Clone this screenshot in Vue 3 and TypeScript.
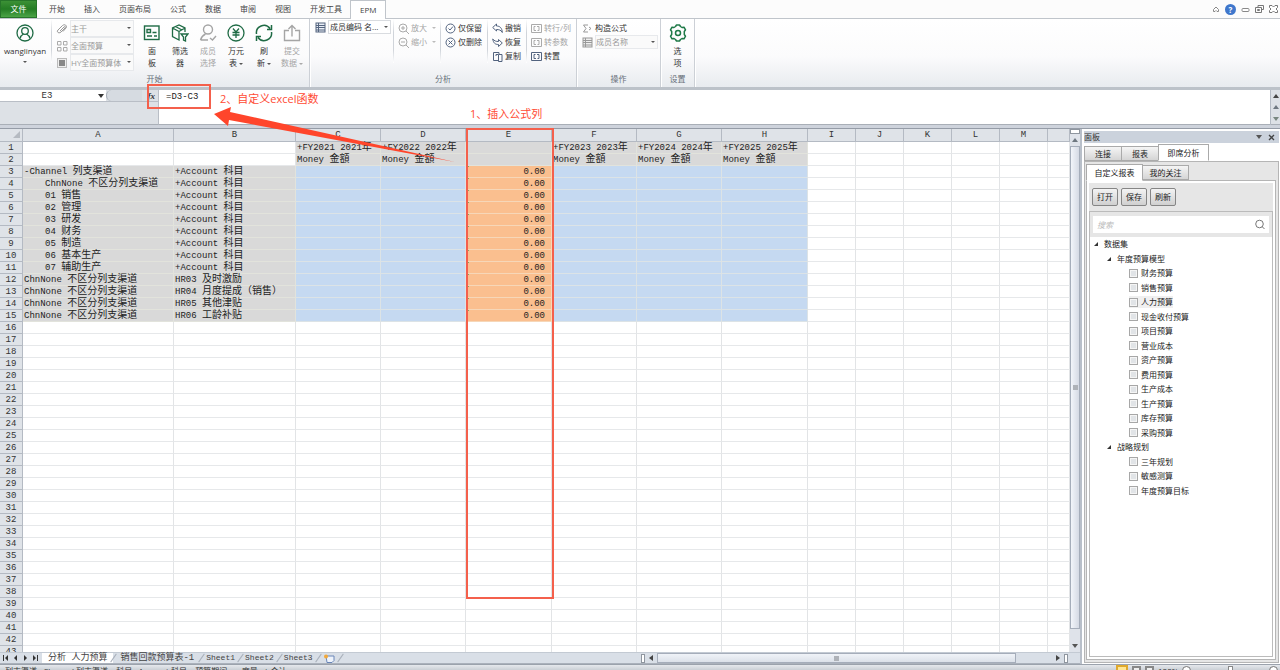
<script setup lang="ts">
import { ref } from 'vue'

interface Run { text: string; cjk: boolean }
interface Node { label: string; level: number; hover?: boolean }

const split = (s: string): Run[] =>
  s.split(/([\u2e80-\uffff]+)/).filter(Boolean).map(text => ({ text, cjk: /[\u2e80-\uffff]/.test(text) }))

const menu = ['开始', '插入', '页面布局', '公式', '数据', '审阅', '视图', '开发工具']
const columns = 'ABCDEFGHIJKLM'.split('')
const rowCount = 43

const chn = 'ChnNone 不区分列支渠道'
const acc = '+Account 科目'
const members: [string, string, number][] = [
  ['-Channel 列支渠道', acc, 0],
  [chn, acc, 1],
  ['01 销售', acc, 1],
  ['02 管理', acc, 1],
  ['03 研发', acc, 1],
  ['04 财务', acc, 1],
  ['05 制造', acc, 1],
  ['06 基本生产', acc, 1],
  ['07 辅助生产', acc, 1],
  [chn, 'HR03 及时激励', 0],
  [chn, 'HR04 月度提成（销售）', 0],
  [chn, 'HR05 其他津贴', 0],
  [chn, 'HR06 工龄补贴', 0],
]
const years: Record<string, string> = { C: '2021', D: '2022', F: '2023', G: '2024', H: '2025' }

function cellText(row: number, col: string): string {
  if (row <= 2 && years[col]) return row === 1 ? `+FY${years[col]} ${years[col]}年` : 'Money 金額'
  const m = members[row - 3]
  if (!m) return ''
  if (col === 'A') return m[0]
  if (col === 'B') return m[1]
  return col === 'E' ? '0.00' : ''
}
function cellClass(row: number, col: string): string[] {
  const out: string[] = []
  if (row <= 2) {
    if ('CDEFGH'.includes(col)) out.push('dim')
  } else if (row <= 15) {
    if ('AB'.includes(col)) out.push('dim')
    else if (col === 'E') out.push('calc')
    else if ('CDFGH'.includes(col)) out.push('data')
    if (col === 'A' && members[row - 3][2]) out.push('indent')
  }
  return out
}

const tree: Node[] = [
  { label: '数据集', level: 0 },
  { label: '年度预算模型', level: 1 },
  ...['财务预算', '销售预算', '人力预算', '现金收付预算', '项目预算', '营业成本', '资产预算', '费用预算', '生产成本', '生产预算', '库存预算', '采购预算']
    .map(label => ({ label, level: 2, hover: label === '人力预算' })),
  { label: '战略规划', level: 1 },
  ...['三年规划', '敏感测算', '年度预算目标'].map(label => ({ label, level: 2 })),
]

const cellName = ref('E3')
const formula = ref('=D3-C3')
const query = ref('')
</script>

<template>
  <div class="app">
    <nav class="menu">
      <button class="file">文件</button>
      <button v-for="m in menu" :key="m" class="tab">{{ m }}</button>
      <button class="tab current">EPM</button>
      <div class="window">
        <button aria-label="折叠功能区"><svg width="8" height="8" viewBox="0 0 8 8"><path d="M1.500 4.500L4 2l2.500 2.500v2H5L4 5.500l-1 1H1.500z" fill="#fff" stroke="#888" /></svg></button>
        <button aria-label="帮助" class="help">?</button>
        <button aria-label="最小化"><svg width="9" height="8" viewBox="0 0 9 8"><rect x="1" y="3.500" width="7" height="3" rx="1" fill="#fff" stroke="#888" /></svg></button>
        <button aria-label="还原"><svg width="9" height="8" viewBox="0 0 9 8"><path d="M3 2.500v-2h5.500v4h-2M.5 2.500h6v5h-6zM2.500 4.500h2v1h-2z" fill="none" stroke="#777" /></svg></button>
        <button aria-label="关闭"><svg width="9" height="8" viewBox="0 0 9 8"><path d="M.5.5h2.500l1.500 1.500L6 .5h2.500v2L7 4l1.500 1.500v2H6L4.500 6 3 7.500H.5v-2L2 4 .5 2.500z" fill="#fff" stroke="#777" /></svg></button>
      </div>
    </nav>

    <header class="ribbon">
      <section class="group start">
        <div class="tools">
          <button class="big user">
            <svg width="18" height="18" viewBox="0 0 18 18" fill="none" stroke="#1f6b45" stroke-width="1.300"><circle cx="9" cy="9" r="8" /><circle cx="9" cy="7" r="3.300" /><path d="M4 14.500c.6-3 2.500-4 3.500-4.500M14 14.500c-.6-3-2.500-4-3.500-4.500" /></svg>
            <span>wanglinyan</span><i class="caret"></i>
          </button>
          <span class="rule"></span>
          <div class="combos">
            <label class="combo">
              <svg width="12" height="12" viewBox="0 0 12 12" fill="none" stroke="#999"><path d="M4 8l4-4c1-1 2 0 1 1L5 9C3 11 0 9 2 7l4.500-4.500c2.500-2 5 .5 3.500 2.500L7 8.500" /></svg>
              <span class="pick"><select disabled aria-label="版本"><option>主干</option></select><i class="caret"></i></span>
            </label>
            <label class="combo">
              <svg width="12" height="12" viewBox="0 0 12 12" fill="none" stroke="#aaa"><path d="M1.500 1.500h3.500v3.500H1.500zM7.500 1.500H11v3.500H7.500zM1.500 7.500h3.500V11H1.500zM7.500 7.500H11V11H7.500z" /></svg>
              <span class="pick"><select disabled aria-label="模型"><option>全面预算</option></select><i class="caret"></i></span>
            </label>
            <label class="combo">
              <svg width="12" height="12" viewBox="0 0 12 12"><rect x="1.500" y="1.500" width="9" height="9" fill="#eee" stroke="#bbb" /><rect x="3" y="3" width="6" height="6" fill="#888" /></svg>
              <span class="pick"><select disabled aria-label="体系"><option>HY全面预算体</option></select><i class="caret"></i></span>
            </label>
          </div>
          <div class="bigs">
            <button class="big">
              <svg width="18" height="18" viewBox="0 0 18 18" fill="none" stroke="#1f6b45" stroke-width="1.400"><rect x="1.500" y="2" width="14.500" height="13.500" /><path d="M4 5.500h3.500v3H4zM9.500 8.500h4M4 12h5M11 12h3" /></svg>
              <span>面<br />板</span>
            </button>
            <button class="big">
              <svg width="18" height="18" viewBox="0 0 18 18" fill="none" stroke="#1f6b45" stroke-width="1.300"><path d="M14 8V4L8 1 1.500 4v8.500L8 16V7.500L14 4M8 7.500L1.500 4M4.500 2.500L11 6" /><path d="M10 10h7l-2.500 3v4L12.500 16v-3z" /></svg>
              <span>筛选<br />器</span>
            </button>
            <button class="big off" disabled>
              <svg width="18" height="18" viewBox="0 0 18 18" fill="none" stroke="#a5a5a5" stroke-width="1.400"><circle cx="9" cy="5.500" r="4.500" /><path d="M1.500 16c1-4 3-5 5-6M1.500 16H9M11 14l2.500 2L17 12" /></svg>
              <span>成员<br />选择</span>
            </button>
            <button class="big">
              <svg width="18" height="18" viewBox="0 0 18 18" fill="none" stroke="#1f6b45" stroke-width="1.300"><circle cx="9" cy="9" r="8" /><path d="M6 4.500L9 8l3-3.500M9 8v6M5.500 8.500h7M5.500 11h7" /></svg>
              <span>万元<br />表 <i class="caret"></i></span>
            </button>
            <button class="big">
              <svg width="18" height="18" viewBox="0 0 18 18" fill="none" stroke="#1f6b45" stroke-width="1.500"><path d="M1.500 10A7.500 7.500 0 0 1 15 4.500M16.500 1v4.500H12M16.500 8A7.500 7.500 0 0 1 3 13.500M1.500 17v-4.500H6" /></svg>
              <span>刷<br />新 <i class="caret"></i></span>
            </button>
            <button class="big off" disabled>
              <svg width="18" height="18" viewBox="0 0 18 18" fill="none" stroke="#a5a5a5" stroke-width="1.400"><path d="M6 6.500H1.500v10h15v-10H12M9 12.500V2M5.500 5L9 1.500 12.500 5" /></svg>
              <span>提交<br />数据 <i class="caret"></i></span>
            </button>
          </div>
        </div>
        <h2>开始</h2>
      </section>

      <section class="group analysis">
        <div class="tools">
          <label class="combo names">
            <svg width="11" height="11" viewBox="0 0 11 11"><rect x="1" y="1" width="9" height="9" fill="#e9eef6" stroke="#55657f" /><path d="M1 3.500h9M1 5.500h9M1 8h9M3.500 1v9" stroke="#55657f" /></svg>
            <span class="pick lit"><select aria-label="成员显示"><option>成员编码 名...</option></select><i class="caret"></i></span>
          </label>
          <span class="rule"></span>
          <div class="smalls zoomers">
            <button disabled><svg width="11" height="11" viewBox="0 0 11 11" fill="none" stroke="#aaa"><circle cx="5" cy="5" r="4" /><path d="M8 8l3 3M3 5h4M5 3v4" /></svg>放大<i class="caret"></i></button>
            <button disabled><svg width="11" height="11" viewBox="0 0 11 11" fill="none" stroke="#aaa"><circle cx="5" cy="5" r="4" /><path d="M8 8l3 3M3 5h4" /></svg>缩小<i class="caret"></i></button>
          </div>
          <span class="rule"></span>
          <div class="smalls keepers">
            <button><svg width="11" height="11" viewBox="0 0 11 11" fill="none" stroke="#52637f"><circle cx="5.500" cy="5.500" r="4.500" /><path d="M3.500 5.500L5 7l3-3.500" /></svg>仅保留</button>
            <button><svg width="11" height="11" viewBox="0 0 11 11" fill="none" stroke="#52637f"><circle cx="5.500" cy="5.500" r="4.500" /><path d="M3.500 3.500l4 4M7.500 3.500l-4 4" /></svg>仅删除</button>
          </div>
          <span class="rule"></span>
          <div class="smalls history">
            <button><svg width="11" height="11" viewBox="0 0 11 11" fill="none" stroke="#52637f"><path d="M.7 4.500L4.500 1v2C8 3 10 5 10.300 9.500 9 7 7 6.500 4.500 6.500V8z" /></svg>撤销</button>
            <button><svg width="11" height="11" viewBox="0 0 11 11" fill="none" stroke="#52637f"><path d="M10.300 6L6.500 9.500v-2C3 7.500 1.500 6 .7 2 2.500 4 4 4.500 6.500 4.500v-2z" /></svg>恢复</button>
            <button><svg width="11" height="11" viewBox="0 0 11 11" fill="none" stroke="#52637f"><path d="M6.500 9.500h-5v-8H7v2M4 5V3.500h2M6.500 3.500h3.500v7H6.500z" /></svg>复制</button>
          </div>
          <span class="rule"></span>
          <div class="smalls swap">
            <button disabled><svg width="11" height="11" viewBox="0 0 11 11" fill="none" stroke="#aaa"><path d="M.5 1.500h10v8H.5zM4.500 3.500H3v4h2M6 3.500h2v4H6.500" /></svg>转行/列</button>
            <button disabled><svg width="11" height="11" viewBox="0 0 11 11" fill="none" stroke="#aaa"><path d="M.5 1.500h10v8H.5zM4.500 3.500H3v4h2M6 3.500h2v4H6.500" /></svg>转参数</button>
            <button><svg width="11" height="11" viewBox="0 0 11 11" fill="none" stroke="#52637f"><path d="M.5 1.500h10v8H.5zM4.500 3.500H3v4h2M6 3.500h2v4H6.500" /></svg>转置</button>
          </div>
        </div>
        <h2>分析</h2>
      </section>

      <section class="group ops">
        <div class="tools smalls">
          <button><svg width="11" height="11" viewBox="0 0 11 11" fill="none" stroke="#999"><path d="M6 2H1.500L4 5.500 1.500 9H6M7 4l2 1.500L7 7" /></svg>构造公式</button>
          <label class="combo">
            <svg width="11" height="11" viewBox="0 0 11 11"><rect x="1" y="1" width="9" height="9" fill="#eee" stroke="#999" /><path d="M1 3.500h9M1 5.500h9M1 8h9M3.500 1v9" stroke="#999" /></svg>
            <span class="pick"><select disabled aria-label="成员"><option>成员名称</option></select><i class="caret"></i></span>
          </label>
        </div>
        <h2>操作</h2>
      </section>

      <section class="group settings">
        <div class="tools">
          <button class="big">
            <svg width="18" height="18" viewBox="0 0 18 18" fill="none" stroke="#1f7a48" stroke-width="1.500"><path d="M6.500 2.500L7.500 1h3l1 1.500 1.500 1 2-.3 1.500 2.600L15.300 7.500v3l1.200 1.700-1.500 2.600-2-.3-1.500 1-1 1.500h-3l-1-1.500-1.500-1-2 .3-1.500-2.600L2.700 10.500v-3L1.500 5.800 3 3.200l2 .3z" stroke-linejoin="round" /><circle cx="9" cy="9" r="2.500" /></svg>
            <span>选<br />项</span>
          </button>
        </div>
        <h2>设置</h2>
      </section>
    </header>

    <div class="formulabar">
      <div class="namebox"><input v-model="cellName" aria-label="名称框" /><i class="caret"></i></div>
      <div class="fx"><span class="knob"></span><button aria-label="插入函数">fx</button></div>
      <textarea v-model="formula" aria-label="编辑栏" spellcheck="false"></textarea>
      <div class="fscroll"><i class="up dark"></i><i class="up"></i><i class="down"></i></div>
    </div>

    <main class="work">
      <div class="book">
        <div class="view">
          <div class="cells">
            <table>
              <colgroup>
                <col class="c-head" /><col class="c-a" /><col class="c-b" />
                <col class="c-m" /><col class="c-m" /><col class="c-w" /><col class="c-m" /><col class="c-m" /><col class="c-w" />
                <col v-for="n in 5" :key="n" class="c-s" /><col />
              </colgroup>
              <thead>
                <tr><th class="corner"><i></i></th><th v-for="c in columns" :key="c" scope="col">{{ c }}</th><th></th></tr>
              </thead>
              <tbody>
                <tr v-for="r in rowCount" :key="r">
                  <th scope="row">{{ r }}</th>
                  <td v-for="c in columns" :key="c" :class="cellClass(r, c)"><span v-for="(run, i) in split(cellText(r, c))" :key="i" :class="{ cjk: run.cjk }">{{ run.text }}</span></td>
                  <td></td>
                </tr>
              </tbody>
            </table>
          </div>
          <div class="vscroll"><span class="splitter"></span><i class="up"></i><div class="thumb"><b></b></div><i class="down"></i></div>
        </div>
        <div class="sheets">
          <div class="sheettabs">
            <div class="steps">
              <button aria-label="第一张"><svg width="6" height="6" viewBox="0 0 6 6"><path d="M0 0h1v6H0zM5 0v6L2 3z" fill="#333" /></svg></button>
              <button aria-label="上一张"><svg width="6" height="6" viewBox="0 0 6 6"><path d="M4 0v6L1 3z" fill="#333" /></svg></button>
              <button aria-label="下一张"><svg width="6" height="6" viewBox="0 0 6 6"><path d="M2 0v6l3-3z" fill="#333" /></svg></button>
              <button aria-label="最后一张"><svg width="6" height="6" viewBox="0 0 6 6"><path d="M5 0h1v6H5zM1 0v6l3-3z" fill="#333" /></svg></button>
            </div>
            <button class="sheet active">分析 人力预算</button>
            <button class="sheet wide">销售回款预算表-1</button>
            <button class="sheet">Sheet1</button>
            <button class="sheet">Sheet2</button>
            <button class="sheet">Sheet3</button>
            <button class="sheet" aria-label="插入工作表"><svg width="12" height="9" viewBox="0 0 12 9"><path d="M3 2h8v4.500L9 8.500H4z" fill="#eef3fb" stroke="#6a86b8" /><circle cx="3" cy="2.500" r="2" fill="#f2a93b" /></svg></button>
          </div>
          <div class="hscroll"><span class="grip"></span><i class="left"></i><div class="track"><div class="thumb"><b></b></div></div><i class="right"></i><span class="grip"></span></div>
        </div>
      </div>

      <aside class="panel">
        <div class="title"><span>面板</span><button aria-label="面板选项"><i class="down"></i></button><button aria-label="关闭面板"><svg width="7" height="7" viewBox="0 0 7 7"><path d="M1 1l5 5M6 1L1 6" stroke="#444" stroke-width="1.300" /></svg></button></div>
        <div class="ptabs"><button>连接</button><button>报表</button><button class="on">即席分析</button></div>
        <div class="page">
          <div class="ptabs inner"><button class="on">自定义报表</button><button>我的关注</button></div>
          <div class="frame">
            <div class="actions"><button>打开</button><button>保存</button><button>刷新</button></div>
            <div class="list">
              <div class="search"><input v-model="query" placeholder="搜索" aria-label="搜索" /><svg width="10" height="10" viewBox="0 0 10 10" fill="none" stroke="#777"><circle cx="4.500" cy="4.500" r="3.800" /><path d="M7 7l2.500 2.500" /></svg></div>
              <ul>
                <li v-for="n in tree" :key="n.label" :class="'l' + n.level">
                  <label v-if="n.level === 2" :class="{ hover: n.hover }"><input type="checkbox" />{{ n.label }}</label>
                  <template v-else><svg width="6" height="6" viewBox="0 0 6 6"><path d="M5 1v4H1z" fill="#333" /></svg>{{ n.label }}</template>
                </li>
              </ul>
            </div>
          </div>
        </div>
      </aside>
    </main>

    <footer class="status">
      <p>列支渠道 : Channel 列支渠道 &nbsp; &nbsp;科目 : Account 科目 &nbsp; &nbsp;预算期间 : &nbsp; &nbsp; 度量 : | 合计</p>
      <div class="zoom"><span class="vw sel"></span><span class="vw"></span><span class="vw"></span><span class="pct">100%</span><span class="dot"></span><span class="slide"><span class="knob2"></span></span><span class="dot"></span></div>
    </footer>

    <div class="mark-formula"></div>
    <div class="mark-column"></div>
    <svg class="arrow" width="245" height="60" viewBox="0 0 245 60"><path d="M1 9L18 2l-1 5 225 50L16 15l-1 6z" fill="#ff452b" /></svg>
    <p class="note first">1、插入公式列</p>
    <p class="note second">2、自定义excel函数</p>
  </div>
</template>

<style>
html, body { margin: 0; overflow: hidden; }
</style>

<style scoped>
.app { position: relative; display: flex; flex-direction: column; height: 100vh; overflow: hidden; background: #fff; color: #333; font: 8px/12px "Open Sans", "Noto Sans CJK SC", sans-serif; }
.app *, .app *::before { box-sizing: border-box; }
button, input, select, textarea { font: inherit; color: inherit; margin: 0; padding: 0; border: 0; background: none; outline: 0; }
button { white-space: nowrap; }
svg { flex: none; display: block; }
h2, p, ul { margin: 0; padding: 0; font-weight: normal; }
i { display: block; flex: none; width: 0; height: 0; }
.caret { display: inline-block; border: 2px solid transparent; border-top-color: #555; border-bottom: 0; vertical-align: middle; }
.up { border: 3px solid transparent; border-bottom: 4px solid #6e7780; border-top: 0; }
.down { border: 3px solid transparent; border-top: 4px solid #555; border-bottom: 0; }
.left { border: 3px solid transparent; border-right: 4px solid #444; border-left: 0; }
.right { border: 3px solid transparent; border-left: 4px solid #444; border-right: 0; }

.menu { display: flex; flex: none; gap: 1px; height: 19px; background: #fcfcfc; border-bottom: 1px solid #c0c5cb; }
.file { width: 37px; margin-right: 2px; color: #fff; background: linear-gradient(#3c9136, #247c24 50%, #4ba447); border: 1px solid #27752a; }
.tab { padding: 0 9px; color: #444; }
.current { height: 19px; margin-left: -2px; background: #fff; border: 1px solid #c0c5cb; border-bottom: 0; }
.window { display: flex; align-items: center; gap: 5px; margin-left: auto; padding-right: 2px; }
.help { width: 11px; height: 11px; border-radius: 50%; background: #3f77cc; color: #fff; font-weight: bold; line-height: 11px; }

.ribbon { display: flex; flex: none; height: 68px; background: linear-gradient(#fff 0, #fbfbfc 55%, #e8ebef); }
.group { display: flex; flex-direction: column; border-right: 1px solid #ccd0d6; box-shadow: 1px 0 #fff; }
.group h2 { margin-top: auto; height: 14px; font-size: 8px; line-height: 12px; text-align: center; color: #666e78; }
.tools { display: flex; }
.start { width: 310px; }
.analysis { width: 267px; }
.ops { width: 84px; }
.settings { width: 34px; }
.rule { width: 1px; height: 44px; background: linear-gradient(#fff, #d0d4da 30%, #d0d4da 70%, #fff); }
.big { display: flex; flex-direction: column; align-items: center; width: 28px; padding-top: 5px; }
.big span { margin-top: 3px; line-height: 12px; }
.off { color: #a5a5a5; }
.off .caret { border-top-color: #aaa; }
.user { width: 50px; }
.user .caret { margin-top: 4px; }
.user + .rule { margin-left: 1px; }
.combos { padding: 1px 0 0 4px; width: 82px; margin-right: 4px; }
.combo { display: flex; align-items: center; gap: 2px; }
.pick { position: relative; display: flex; flex: 1; min-width: 0; height: 17px; border: 1px solid #e7e9ec; background: #fafafa; }
.pick select { flex: 1; width: 100%; padding: 0; appearance: none; opacity: 1; color: #999; overflow: hidden; }
.pick .caret { position: absolute; right: 2px; top: 6px; }
.pick.lit { height: 14px; border-color: #d9dce0; background: #fff; }
.pick.lit select { color: #333; padding-left: 1px; }
.pick.lit .caret { top: 5px; }
.bigs { display: flex; }
.names { align-self: flex-start; width: 81px; padding: 1px 0 0 5px; margin-right: 2px; }
.smalls { display: flex; flex-direction: column; padding: 2px 0 0 4px; }
.smalls button { display: flex; align-items: center; gap: 2px; height: 14px; }
.smalls button:disabled { color: #a5a5a5; }
.smalls button .caret { margin-left: 3px; }
.smalls button:disabled .caret { border-top-color: #bbb; }
.zoomers { width: 46px; }
.keepers { width: 46px; }
.history { width: 38px; }
.swap { width: 46px; }
.ops .smalls { padding: 2px 2px 0 5px; }
.ops .pick { height: 14px; }
.ops .pick .caret { top: 5px; }
.settings .big { width: 34px; }

.formulabar { display: flex; flex: none; height: 41px; border-top: 3px solid #bcc2c9; border-bottom: 3px solid #ced3dc; background: #dde1e6; font: 9px/14px "Liberation Mono", "Noto Sans CJK SC", monospace; box-shadow: inset 0 -1px #a9afb7; }
.namebox { display: flex; align-items: center; width: 106px; height: 12px; background: #fff; border-bottom: 1px solid #b9bec6; }
.namebox input { width: 98px; padding-right: 4px; text-align: center; }
.namebox .caret { border-width: 3px; border-bottom: 0; border-top-width: 4px; border-top-color: #333; }
.fx { display: flex; justify-content: space-between; align-items: center; width: 52px; height: 12px; padding-right: 3px; border-bottom: 1px solid #b9bec6; }
.fx button { font: italic bold 9px/12px "Liberation Serif", serif; }
.knob { width: 36px; height: 11px; border-left: 1px solid #a5acb5; border-radius: 6px 0 0 6px; background: #d6dbe1; }
.formulabar textarea { flex: 1; height: 35px; padding: 0 7px; resize: none; background: #fff; border-left: 1px solid #b9bec6; border-bottom: 1px solid #a9afb7; color: #222; overflow: hidden; }
.fscroll { display: flex; flex-direction: column; align-items: center; justify-content: space-around; width: 10px; height: 35px; border-left: 1px solid #b5bbc4; }
.fscroll .down { border-top-color: #78877f; }
.dark { border-bottom-color: #444; }

.work { display: flex; flex: 1; min-height: 0; border-top: 1px solid #959ca7; }
.book { display: flex; flex: 1; flex-direction: column; min-width: 0; }
.view { display: flex; flex: 1; min-height: 0; }
.cells { flex: 1; min-width: 0; overflow: hidden; }
table { width: 100%; table-layout: fixed; border-collapse: separate; border-spacing: 0; font: 9px/9px "Liberation Mono", "Noto Sans CJK SC", monospace; color: #222; }
.c-head { width: 23px; } .c-a { width: 151px; } .c-b { width: 122px; }
.c-m { width: 85px; } .c-w { width: 86px; } .c-s { width: 48px; }
th, td { height: 12px; padding: 2px 0 0; font-weight: normal; vertical-align: top; border-right: 1px solid #e2e4e6; border-bottom: 1px solid #e6e8ea; white-space: pre; }
thead th { height: 13px; }
th { background: #dfe3e8; border-color: #b4bac3; color: #333; }
td { text-align: left; padding-left: 1px; }
.cjk { font: 10px/0 "Noto Sans CJK SC", sans-serif; }
.dim { background: #d9d9d9; border-right-color: #e2e3dc; border-bottom-color: #e2e3dc; }
.data { background: #c5d9f1; border-color: #dce3e6; }
.calc { position: relative; background: #fabf8f; border-color: #f6d7b8; text-align: right; padding-right: 6px; }
.calc::before { content: ""; position: absolute; left: 0; top: 0; border-top: 3px solid #16882a; border-right: 3px solid transparent; }
.indent { padding-left: 22px; }
.corner i { margin-left: auto; margin-right: 2px; border-left: 7px solid transparent; border-bottom: 7px solid #b5bac1; }
.vscroll { display: flex; flex-direction: column; align-items: center; width: 10px; padding-bottom: 4px; background: #dfe3ea; }
.splitter { width: 10px; height: 5px; margin-bottom: 4px; border: 1px solid #8f969f; background: #fff; }
.vscroll .thumb { display: flex; flex: 1; align-items: center; justify-content: center; align-self: stretch; margin: 4px 0 15px; border: 1px solid #a5adba; background: linear-gradient(90deg, #f2f5fa, #d5dae4); }
.thumb b { width: 5px; height: 5px; background: #aeb2b8; }
.sheets { display: flex; flex: none; height: 12px; background: #d9dfe7; border-top: 1px solid #c3cad3; border-bottom: 1px solid #aab1bb; }
.sheettabs { display: flex; flex: 0 0 640px; min-width: 0; font: 9px/10px "Liberation Mono", "Noto Sans CJK SC", monospace; }
.steps { display: flex; align-items: center; justify-content: space-between; width: 42px; padding: 0 4px 0 3px; }
.sheet { position: relative; padding: 0 5px; font-size: 8px; color: #444; }
.sheet::before { content: ""; position: absolute; right: -1px; top: 0; width: 1px; height: 10px; background: #aab1bb; transform: rotate(35deg); }
.sheet.active { padding: 0 6px; font-size: 9px; background: #fff; }
.sheet.wide { padding: 0 7px; font-size: 9px; }
.hscroll { display: flex; flex: 1; align-items: center; gap: 4px; padding: 0 12px 0 1px; }
.grip { width: 4px; height: 9px; border: 1px solid #8f969f; background: #fff; }
.track { flex: 1; height: 10px; }
.track .thumb { display: flex; align-items: center; justify-content: center; width: 91%; height: 10px; border: 1px solid #a5adba; background: linear-gradient(#f0f3f8, #dce1e9); }

.panel { display: flex; flex: none; flex-direction: column; width: 200px; padding: 2px 1px 1px 2px; border-left: 2px solid #b8bfc9; background: #fff; }
.title { display: flex; flex: none; align-items: center; gap: 6px; height: 12px; padding: 0 4px 0 0; background: #cbd2dc; }
.title span { flex: 1; }
.ptabs { display: flex; flex: none; align-items: flex-end; height: 18px; color: #222; }
.ptabs button { width: 38px; height: 15px; border: 1px solid #aaa; background: linear-gradient(#f5f5f5, #d5d5d5); margin-right: -1px; }
.ptabs button.on { width: 51px; height: 17px; background: #fff; border-bottom-color: #fff; }
.page { display: flex; flex: 1; flex-direction: column; min-height: 0; padding: 1px 2px 2px 1px; border: 1px solid #b5b5b5; background: #e6e6e6; }
.ptabs.inner { height: 17px; }
.ptabs.inner button { width: 47px; }
.ptabs.inner button.on { width: 57px; margin-bottom: -1px; z-index: 1; }
.frame { display: flex; flex: 1; flex-direction: column; min-height: 0; padding: 2px; border: 1px solid #b5b5b5; background: #fff; }
.actions { display: flex; gap: 3px; padding: 5px 3px; background: #e6e6e6; }
.actions button { width: 26px; height: 18px; color: #222; border: 1px solid #858585; border-radius: 2px; background: linear-gradient(#f3f3f3, #d0d0d0); }
.list { flex: 1; min-height: 0; border: 1px solid #bbb; background: #fff; }
.search { display: flex; align-items: center; height: 25px; padding: 0 3px; background: #e6e6e6; }
.search input { flex: 1; min-width: 0; height: 17px; padding: 0 4px; background: #fff; }
.search input::placeholder { color: #bbb; font-style: italic; opacity: 1; }
.search svg { width: 18px; height: 17px; padding: 3px 4px; background: #fff; }
ul { display: grid; grid-auto-rows: 14px 15px; list-style: none; }
li { display: flex; align-items: center; gap: 5px; color: #222; }
.l0 { padding-left: 3px; } .l1 { padding-left: 16px; } .l2 { padding-left: 39px; }
.l2 label { display: flex; align-items: center; gap: 3px; height: 12px; }
.hover { background: #f0f0f0; }
li input { appearance: none; width: 9px; height: 9px; border: 1px solid #a7a7a7; background: #e1e4e7; box-shadow: inset 0 0 0 1px #f5f5f5; }

.status { display: flex; flex: none; justify-content: space-between; height: 6px; overflow: hidden; padding: 0 2px 0 5px; background: linear-gradient(#e5e8ec, #cbd0d6); border-top: 1px solid #9ba2ac; }
.status p, .pct { line-height: 11px; white-space: nowrap; }
.zoom { display: flex; gap: 4px; width: 162px; }
.vw { width: 9px; height: 10px; margin-top: 1px; border: 2px solid #888; background: #eee; }
.vw.sel { width: 12px; margin-top: 0; border-color: #e0a92c; background: #ffe694; }
.dot { width: 9px; height: 9px; margin-top: 1px; border: 1px solid #777; border-radius: 50%; background: #fff; }
.slide { display: flex; flex: 1; justify-content: center; }
.knob2 { width: 5px; height: 8px; margin-top: 1px; border: 1px solid #888; background: #fff; }

.mark-formula { position: absolute; left: 147px; top: 84px; width: 64px; height: 25px; border: 2px solid #f4604c; }
.mark-column { position: absolute; left: 466px; top: 128px; width: 88px; height: 471px; border: 2px solid #f4604c; }
.arrow { position: absolute; left: 213px; top: 105px; }
.note { position: absolute; font: 11px/16px "Open Sans", "Noto Sans CJK SC", sans-serif; color: #ff4b34; white-space: nowrap; }
.first { left: 470px; top: 106px; }
.second { left: 220px; top: 91px; }
</style>
